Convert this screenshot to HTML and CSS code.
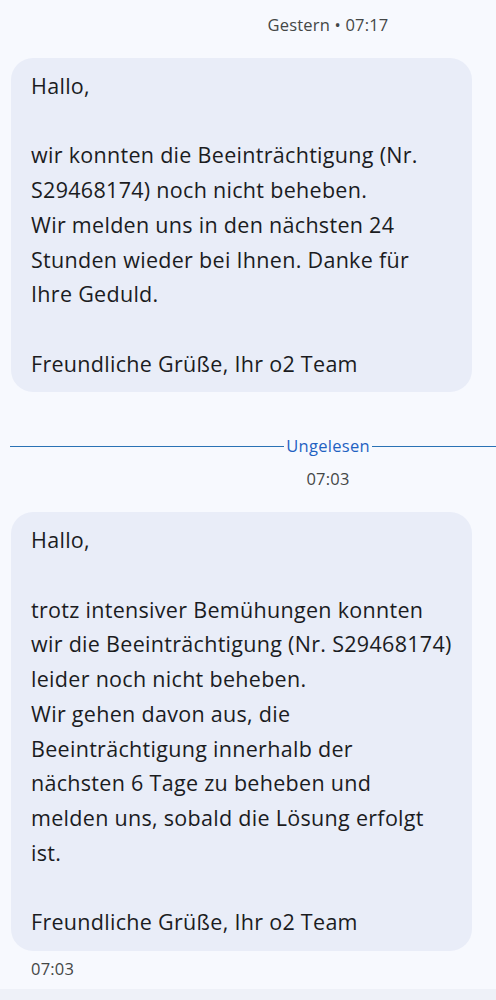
FILE: index.html
```html
<!DOCTYPE html>
<html lang="de">
<head>
    <meta charset="UTF-8">
    <title>Nachrichten – o2</title>
    <link rel="stylesheet" href="styles.css">
</head>
<body>

    <div class="chat">
        <div class="stamp stamp-top">Gestern • 07:17</div>

        <div class="bubble">
            <p>Hallo,</p>
            <p>wir konnten die Beeinträchtigung (Nr.<br>
            S29468174) noch nicht beheben.<br>
            Wir melden uns in den nächsten 24<br>
            Stunden wieder bei Ihnen. Danke für<br>
            Ihre Geduld.</p>
            <p>Freundliche Grüße, Ihr o2 Team</p>
        </div>

        <div class="unread">
            <span class="line line-left"></span>
            <span class="unread-label">Ungelesen</span>
            <span class="line line-right"></span>
        </div>
        <div class="stamp stamp-unread">07:03</div>

        <div class="bubble bubble-second">
            <p>Hallo,</p>
            <p>trotz intensiver Bemühungen konnten<br>
            wir die Beeinträchtigung (Nr. S29468174)<br>
            leider noch nicht beheben.<br>
            Wir gehen davon aus, die<br>
            Beeinträchtigung innerhalb der<br>
            nächsten 6 Tage zu beheben und<br>
            melden uns, sobald die Lösung erfolgt<br>
            ist.</p>
            <p>Freundliche Grüße, Ihr o2 Team</p>
        </div>
        <div class="msg-time">07:03</div>
    </div>

    <div class="composer"></div>

</body>
</html>
```

FILE: styles.css
```css
body {
    margin: 0;
    font-family: 'Open Sans', Roboto, sans-serif;
    background-color: #f7f9fe;
    color: #1b1c1f;
    height: 1000px;
    overflow: hidden;
}

.chat {
    height: 989px;
    overflow: hidden;
}

.stamp {
    font-size: 16.5px;
    letter-spacing: 0.2px;
    line-height: 22px;
    color: #444746;
    text-align: center;
    padding-left: 160px;
}

.stamp-top {
    padding-top: 14px;
    margin-bottom: 22px;
}

.stamp-unread {
    margin-top: 11px;
    margin-bottom: 22px;
}

.bubble {
    width: 421px;
    margin-left: 11px;
    padding: 11px 20px;
    background-color: #e9edf8;
    border-radius: 22px;
    font-size: 21.5px;
    letter-spacing: 0.3px;
    line-height: 34.7px;
}

.bubble p {
    margin: 0 0 34.7px 0;
    white-space: nowrap;
}

.bubble p:last-child {
    margin-bottom: 0;
}

.unread {
    display: flex;
    align-items: center;
    margin-top: 43px;
    padding-left: 10px;
    height: 22px;
}

.line {
    height: 1px;
    background-color: #2a72b5;
}

.line-left {
    flex: 1;
}

.line-right {
    width: 124px;
}

.unread-label {
    font-size: 16.5px;
    letter-spacing: 0.3px;
    line-height: 22px;
    color: #1f62c2;
    padding: 0 2px;
}

.msg-time {
    margin-top: 7px;
    padding-left: 31px;
    font-size: 16.5px;
    letter-spacing: 0.2px;
    line-height: 22px;
    color: #444746;
}

.composer {
    height: 11px;
    background-color: #eef1f8;
}
```
